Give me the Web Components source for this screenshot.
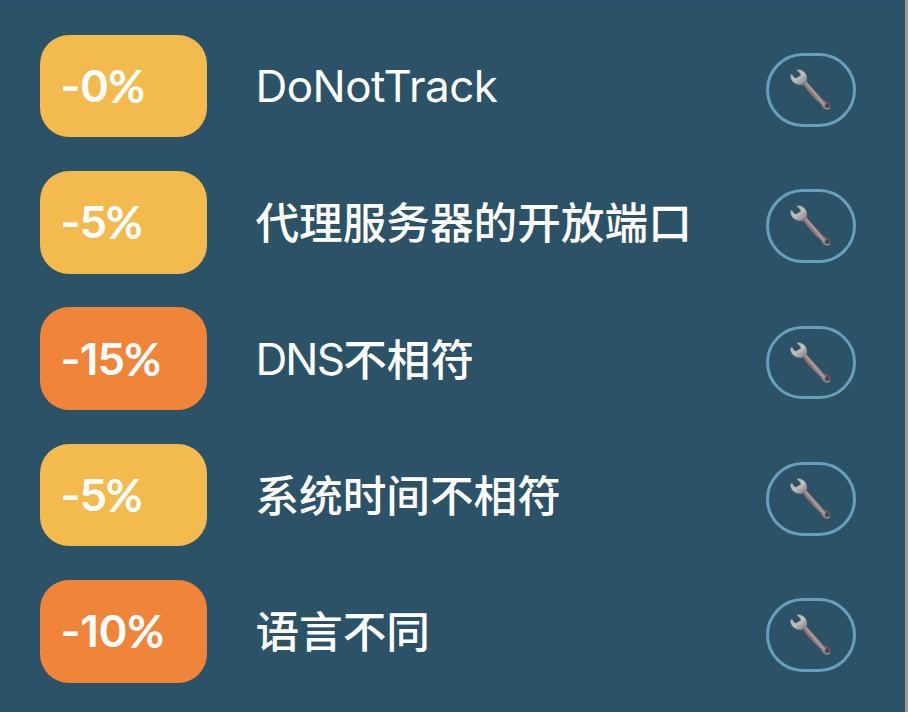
<!DOCTYPE html>
<html lang="zh-CN">
<head>
<meta charset="utf-8">
<title>检测结果</title>
<style>
html,body{margin:0;height:100%;overflow:hidden;background:#2b5266}
</style>
</head>
<body>
<issue-list>
  <issue-row><score-badge slot="score" spacing="-.8">-0<span>%</span></score-badge><issue-name spacing="-.5">DoNotTrack</issue-name></issue-row>
  <issue-row><score-badge slot="score" spacing="-1.3">-5<span>%</span></score-badge><issue-name><span>代理服务器的开放端口</span></issue-name></issue-row>
  <issue-row><score-badge slot="score" level="high" spacing="-.9">-15<span>%</span></score-badge><issue-name spacing="-1.8">DNS<span>不相符</span></issue-name></issue-row>
  <issue-row><score-badge slot="score" spacing="-1.3">-5<span>%</span></score-badge><issue-name><span>系统时间不相符</span></issue-name></issue-row>
  <issue-row><score-badge slot="score" level="high" spacing="-.4">-10<span>%</span></score-badge><issue-name><span>语言不同</span></issue-name></issue-row>
</issue-list>
<script>
const define = (name, html, init) => {
  const t = document.createElement('template');
  t.innerHTML = html;
  customElements.define(name, class extends HTMLElement {
    constructor() {
      super();
      this.attachShadow({mode: 'open'}).append(t.content.cloneNode(true));
    }
    connectedCallback() { if (init) init(this); }
  });
};
const spacing = el => el.style.setProperty('--track', (el.getAttribute('spacing') || 0) + 'px');

define('issue-list', `<style>
:host{display:flex;flex-direction:column;gap:33.7px;box-sizing:border-box;width:908px;height:712px;padding:34.9px 48.6px 0 40.3px;border-right:3px solid #999;color:#fff;
background:linear-gradient(#28506c,#2b5266 5px,#2b5266 708px,#2a4e6d)}
</style><slot></slot>`);

define('issue-row', `<style>
:host{display:grid;grid-template-columns:166.3px 1fr 90.5px;height:102.6px}
.name{padding-left:48.8px;display:flex;align-items:center}
wrench-button{margin-top:18.3px}
</style><slot name="score"></slot><div class="name"><slot></slot></div><wrench-button></wrench-button>`);

define('score-badge', `<style>
:host{display:flex;align-items:center;box-sizing:border-box;height:102.6px;padding:0 0 0 20px;border-radius:29px;background:#f3ba4e;font:600 44px/52px Inter,sans-serif;letter-spacing:var(--track)}
:host([level=high]){background:#f08439}
::slotted(span){font:700 45px/52px Lato,sans-serif;letter-spacing:0}
</style><slot></slot>`, spacing);

define('issue-name', `<style>
:host{display:block;height:60px;white-space:nowrap;font:400 44px/60px Inter,sans-serif;letter-spacing:var(--track)}
::slotted(span){line-height:0;font-family:"Noto Sans CJK SC",sans-serif;font-weight:500;font-size:43.65px;letter-spacing:0;position:relative;top:.8px}
</style><slot></slot>`, spacing);

define('wrench-button', `<style>
:host{display:flex;align-items:center;justify-content:center;box-sizing:border-box;width:90.5px;height:73.5px;border:3px solid #689fbd;border-radius:37px}
svg{display:block;flex:none;width:60px;height:56px;margin:0 2.4px 4px 0}
</style><svg viewBox="0 0 60 56">
<defs><linearGradient id="h" gradientUnits="userSpaceOnUse" x1="30" y1="35" x2="36" y2="30"><stop stop-color="#5b4d50"/><stop offset=".3" stop-color="#89777a"/><stop offset=".65" stop-color="#aaa0a2"/><stop offset="1" stop-color="#62575a"/></linearGradient>
<linearGradient id="j" x1="0" y1="0" x2=".8" y2="1"><stop stop-color="#aaa"/><stop offset=".55" stop-color="#c0c1c3"/><stop offset="1" stop-color="#858487"/></linearGradient></defs>
<path fill="url(#h)" stroke="#4a4346" stroke-width=".5" fill-rule="evenodd" d="M22 24.5L26.2 20.5C31 27 38 33 44 40.5C47.5 40.2 51 42 51.2 46C51 49.5 48 50.5 45.3 49.7C43 49 41.4 47 41 44.5C34 39 28 32.5 22 24.5ZM46 44C44.3 45 45 47.8 47 48C49 48 49.8 45.5 48.5 44.4C47.8 43.7 46.8 43.6 46 44Z"/>
<path fill="url(#j)" stroke="#57565a" stroke-width=".5" d="M17.2 9.2C22 9.2 26 12.2 26.8 16C27.3 18.5 26.8 20 26.7 21L22.8 24.7C18 25.8 13.8 23.8 11.8 20.5C10.3 18.3 9.8 15.8 10.6 14.3L12.5 14.4C13.3 16.3 14.2 17.8 16.2 18L20.6 15.2C20.3 12.8 18.5 11.5 17 10.9Z"/>
</svg>`);
</script>
</body>
</html>
